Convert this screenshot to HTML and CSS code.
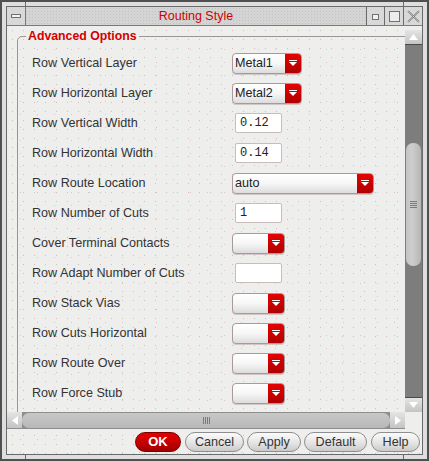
FILE: index.html
```html
<!DOCTYPE html>
<html>
<head>
<meta charset="utf-8">
<link rel="stylesheet" href="styles.css">
</head>
<body>
<div class="window">
  <div class="frame">
    <div class="titlebar">
      <div class="tb-btn tb-menu"><span class="menu-bar"></span></div>
      <div class="tb-title">Routing Style</div>
      <div class="tb-btn tb-min"><span class="min-box"></span></div>
      <div class="tb-btn tb-max"><span class="max-box"></span></div>
      <div class="tb-btn tb-close">
        <svg width="15" height="15" viewBox="0 0 15 15"><path d="M2 2 L13 13 M13 2 L2 13" stroke="#6a6a6a" stroke-width="1.6" fill="none"/><path d="M2 2 L13 13 M13 2 L2 13" stroke="#f4f4f4" stroke-width="0.5" fill="none"/></svg>
      </div>
    </div>
    <div class="body">
      <div class="scroll-top">
        <div class="viewport">
          <fieldset class="group">
            <legend class="group-title">Advanced Options</legend>
            <div class="rows">
              <div class="label">Row Vertical Layer</div>
              <div class="ctl"><div class="combo w70"><span class="val">Metal1</span><span class="arrow"><svg width="8" height="6" viewBox="0 0 8 6"><rect x="0" y="0" width="8" height="1" fill="#fff"/><path d="M0 2 H8 L4 6 Z" fill="#fff"/></svg></span></div></div>

              <div class="label">Row Horizontal Layer</div>
              <div class="ctl"><div class="combo w70"><span class="val">Metal2</span><span class="arrow"><svg width="8" height="6" viewBox="0 0 8 6"><rect x="0" y="0" width="8" height="1" fill="#fff"/><path d="M0 2 H8 L4 6 Z" fill="#fff"/></svg></span></div></div>

              <div class="label">Row Vertical Width</div>
              <div class="ctl"><div class="field">0.12</div></div>

              <div class="label">Row Horizontal Width</div>
              <div class="ctl"><div class="field">0.14</div></div>

              <div class="label">Row Route Location</div>
              <div class="ctl"><div class="combo w142"><span class="val">auto</span><span class="arrow"><svg width="8" height="6" viewBox="0 0 8 6"><rect x="0" y="0" width="8" height="1" fill="#fff"/><path d="M0 2 H8 L4 6 Z" fill="#fff"/></svg></span></div></div>

              <div class="label">Row Number of Cuts</div>
              <div class="ctl"><div class="field">1</div></div>

              <div class="label">Cover Terminal Contacts</div>
              <div class="ctl"><div class="combo w53"><span class="val"></span><span class="arrow"><svg width="8" height="6" viewBox="0 0 8 6"><rect x="0" y="0" width="8" height="1" fill="#fff"/><path d="M0 2 H8 L4 6 Z" fill="#fff"/></svg></span></div></div>

              <div class="label">Row Adapt Number of Cuts</div>
              <div class="ctl"><div class="field"></div></div>

              <div class="label">Row Stack Vias</div>
              <div class="ctl"><div class="combo w53"><span class="val"></span><span class="arrow"><svg width="8" height="6" viewBox="0 0 8 6"><rect x="0" y="0" width="8" height="1" fill="#fff"/><path d="M0 2 H8 L4 6 Z" fill="#fff"/></svg></span></div></div>

              <div class="label">Row Cuts Horizontal</div>
              <div class="ctl"><div class="combo w53"><span class="val"></span><span class="arrow"><svg width="8" height="6" viewBox="0 0 8 6"><rect x="0" y="0" width="8" height="1" fill="#fff"/><path d="M0 2 H8 L4 6 Z" fill="#fff"/></svg></span></div></div>

              <div class="label">Row Route Over</div>
              <div class="ctl"><div class="combo w53"><span class="val"></span><span class="arrow"><svg width="8" height="6" viewBox="0 0 8 6"><rect x="0" y="0" width="8" height="1" fill="#fff"/><path d="M0 2 H8 L4 6 Z" fill="#fff"/></svg></span></div></div>

              <div class="label">Row Force Stub</div>
              <div class="ctl"><div class="combo w53"><span class="val"></span><span class="arrow"><svg width="8" height="6" viewBox="0 0 8 6"><rect x="0" y="0" width="8" height="1" fill="#fff"/><path d="M0 2 H8 L4 6 Z" fill="#fff"/></svg></span></div></div>
            </div>
          </fieldset>
        </div>
        <div class="vscroll">
          <div class="sb-btn sb-up"><svg width="9" height="6" viewBox="0 0 9 6"><path d="M0 6 L4.5 0 L9 6 Z" fill="#fff"/></svg></div>
          <div class="v-track"><div class="v-thumb"><span class="grip-h"></span></div></div>
          <div class="sb-btn sb-down"><svg width="9" height="6" viewBox="0 0 9 6"><path d="M0 0 L4.5 6 L9 0 Z" fill="#fff"/></svg></div>
        </div>
      </div>
      <div class="scroll-bottom">
        <div class="hscroll">
          <div class="sb-btn sb-left"><svg width="6" height="9" viewBox="0 0 6 9"><path d="M6 0 L0 4.5 L6 9 Z" fill="#fff"/></svg></div>
          <div class="h-track"><div class="h-thumb"><span class="grip-v"></span></div></div>
          <div class="sb-btn sb-right"><svg width="6" height="9" viewBox="0 0 6 9"><path d="M0 0 L6 4.5 L0 9 Z" fill="#fff"/></svg></div>
        </div>
        <div class="corner"></div>
      </div>
      <div class="buttons">
        <div class="btn btn-ok">OK</div>
        <div class="btn b-cancel">Cancel</div>
        <div class="btn b-apply">Apply</div>
        <div class="btn b-default">Default</div>
        <div class="btn b-help">Help</div>
      </div>
    </div>
  </div>
  <span class="handle h-tl"></span>
  <span class="handle h-tr"></span>
  <span class="handle h-bl"></span>
  <span class="handle h-br"></span>
</div>
</body>
</html>
```
FILE: styles.css
```css
html, body {
  margin: 0;
  padding: 0;
  background: #dcdcdc;
}
.window {
  position: relative;
  width: 429px;
  height: 461px;
  box-sizing: border-box;
  border: 2px solid #505050;
  padding: 4px;
  background: #dedede;
  font-family: "Liberation Sans", Arial, sans-serif;
}
.handle {
  position: absolute;
  width: 1px;
  height: 5px;
  background: #6a6a6a;
}
.h-tl { left: 23px; top: 0; }
.h-tr { right: 23px; top: 0; }
.h-bl { left: 23px; bottom: 0; }
.h-br { right: 23px; bottom: 0; }
.frame {
  width: 100%;
  height: 100%;
  box-sizing: border-box;
  border: 1px solid #6a6a6a;
  display: flex;
  flex-direction: column;
  background: #eeeeec;
}
.titlebar {
  height: 18px;
  display: flex;
  background: #d4d4d4;
  background-image: radial-gradient(circle, #c2c2c2 0.7px, transparent 0.8px);
  background-size: 3px 3px;
  border-bottom: 1px solid #7a7a7a;
  flex: none;
}
.tb-btn {
  width: 18px;
  height: 18px;
  display: flex;
  align-items: center;
  justify-content: center;
  background: #d8d8d8;
  flex: none;
}
.tb-menu {
  border-right: 1px solid #7a7a7a;
}
.menu-bar {
  width: 10px;
  border: 1px solid #707070;
  background: #f4f4f4;
  box-sizing: border-box;
  height: 4px;
}
.tb-title {
  flex: 1;
  text-align: center;
  color: #d40000;
  font-size: 12.5px;
  line-height: 18px;
}
.tb-min, .tb-max, .tb-close {
  width: 18px;
  border-left: 1px solid #6a6a6a;
}
.tb-min {
  align-items: flex-end;
  padding-bottom: 5px;
  box-sizing: border-box;
}
.min-box {
  width: 5px;
  height: 4px;
  border: 1px solid #707070;
  background: #f0f0f0;
}
.max-box {
  width: 9px;
  height: 9px;
  border: 1px solid #707070;
  background: #ececec;
}
.body {
  flex: 1;
  display: flex;
  flex-direction: column;
  min-height: 0;
  background-color: #eeeeec;
  background-image:
    radial-gradient(circle, #d9b9b9 0.6px, transparent 0.9px),
    radial-gradient(circle, #dcc6c6 0.6px, transparent 0.9px);
  background-size: 11px 9px, 17px 13px;
  background-position: 0 0, 5px 4px;
}
.scroll-top {
  height: 386px;
  display: flex;
  flex: none;
}
.viewport {
  width: 398px;
  overflow: hidden;
  padding-top: 3px;
  padding-left: 10px;
  box-sizing: border-box;
}
.group {
  margin: 0;
  padding: 0 0 10px 0;
  width: 420px;
  border: 1px solid #9d9595;
  border-radius: 5px;
  box-sizing: border-box;
}
.group-title {
  margin-left: 8px;
  padding: 0 2px;
  color: #d40000;
  font-weight: bold;
  font-size: 12.3px;
  line-height: 14px;
  background: #eeeeec;
}
.rows {
  padding-top: 5px;
  padding-left: 14px;
  display: grid;
  grid-template-columns: 200px auto;
  grid-auto-rows: 30px;
  align-items: center;
}
.label {
  font-size: 12.6px;
  color: #333333;
}
.ctl {
  display: flex;
  align-items: center;
}
.combo {
  height: 21px;
  box-sizing: border-box;
  border: 1px solid #a89a9a;
  border-radius: 4px;
  background: linear-gradient(#ffffff 0%, #f6f6f6 50%, #dcdcdc 100%);
  display: flex;
  overflow: hidden;
  box-shadow: 0 1px 0 #d0c8c8;
}
.w70 { width: 70px; }
.w142 { width: 142px; }
.w53 { width: 53px; }
.combo .val {
  flex: 1;
  font-size: 12.6px;
  line-height: 19px;
  padding-left: 2px;
  color: #222;
}
.combo .arrow {
  width: 16px;
  flex: none;
  background: linear-gradient(#e60000, #b00000);
  display: flex;
  align-items: center;
  justify-content: center;
}
.field {
  margin-left: 3px;
  width: 47px;
  height: 20px;
  box-sizing: border-box;
  border: 1px solid #c8bcbc;
  border-radius: 2px;
  background: #ffffff;
  font-family: "Liberation Mono", "DejaVu Sans Mono", monospace;
  font-size: 12px;
  line-height: 18px;
  padding-left: 4px;
  color: #222;
}
.vscroll {
  width: 17px;
  padding-top: 4px;
  display: flex;
  flex-direction: column;
  box-sizing: border-box;
}
.sb-btn {
  background: linear-gradient(#e4e4e4, #c4c4c4);
  display: flex;
  align-items: center;
  justify-content: center;
  flex: none;
}
.sb-up {
  height: 15px;
  border-bottom: 1px solid #4a4a4a;
  box-sizing: border-box;
}
.sb-down {
  height: 15px;
  border-top: 1px solid #4a4a4a;
  box-sizing: border-box;
}
.v-track {
  flex: 1;
  background: #8e8e8e;
  background-image: radial-gradient(circle, #7c7c7c 0.7px, transparent 0.8px);
  background-size: 2px 2px;
  display: flex;
  flex-direction: column;
  align-items: center;
}
.v-thumb {
  margin-top: 98px;
  width: 15px;
  height: 123px;
  border-radius: 7px;
  background: linear-gradient(90deg, #c4c4c4, #cecece 40%, #b6b6b6);
  display: flex;
  align-items: center;
  justify-content: center;
}
.grip-h {
  width: 7px;
  height: 7px;
  background: repeating-linear-gradient(#7a7a7a 0 1px, transparent 1px 2px);
}
.scroll-bottom {
  height: 17px;
  display: flex;
  flex: none;
}
.hscroll {
  width: 398px;
  display: flex;
  background: #8e8e8e;
}
.sb-left, .sb-right {
  width: 15px;
  height: 16px;
}
.h-track {
  flex: 1;
  display: flex;
  align-items: center;
}
.h-thumb {
  flex: 1;
  height: 15px;
  border-radius: 7px;
  background: linear-gradient(#c8c8c8, #b8b8b8);
  display: flex;
  align-items: center;
  justify-content: center;
}
.grip-v {
  width: 7px;
  height: 7px;
  background: repeating-linear-gradient(90deg, #7a7a7a 0 1px, transparent 1px 2px);
}
.corner {
  flex: 1;
  background: #eeeeec;
}
.buttons {
  flex: 1;
  display: flex;
  justify-content: flex-end;
  align-items: center;
  gap: 3px;
  padding-right: 2px;
  padding-top: 1px;
}
.btn {
  height: 20px;
  box-sizing: border-box;
  border: 1px solid #8e8e8e;
  border-radius: 10px;
  background: linear-gradient(#fbfbfb, #e2e2e2 60%, #cacaca);
  font-size: 12.6px;
  line-height: 18px;
  color: #333;
  text-align: center;
}
.btn-ok {
  width: 46px;
  background: linear-gradient(#e40000, #c00000 60%, #a00000);
  border-color: #800000;
  color: #ffffff;
  font-weight: bold;
  font-size: 13px;
  margin-right: 1px;
}
.b-cancel { width: 59px; }
.b-apply { width: 54px; }
.b-default { width: 63px; }
.b-help { width: 49px; margin-left: 1px; }
```
